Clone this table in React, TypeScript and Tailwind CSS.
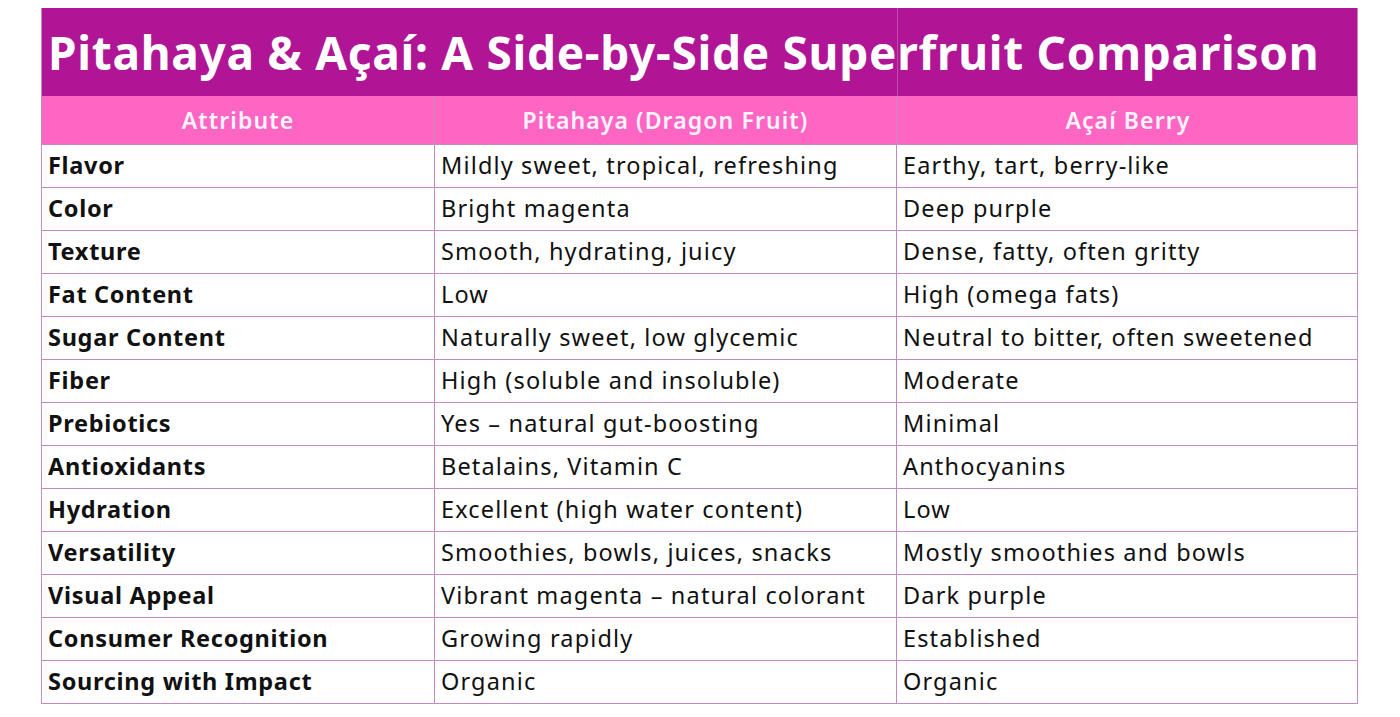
import React from "react";

const rows: [string, string, string][] = [
  ["Flavor", "Mildly sweet, tropical, refreshing", "Earthy, tart, berry-like"],
  ["Color", "Bright magenta", "Deep purple"],
  ["Texture", "Smooth, hydrating, juicy", "Dense, fatty, often gritty"],
  ["Fat Content", "Low", "High (omega fats)"],
  ["Sugar Content", "Naturally sweet, low glycemic", "Neutral to bitter, often sweetened"],
  ["Fiber", "High (soluble and insoluble)", "Moderate"],
  ["Prebiotics", "Yes – natural gut-boosting", "Minimal"],
  ["Antioxidants", "Betalains, Vitamin C", "Anthocyanins"],
  ["Hydration", "Excellent (high water content)", "Low"],
  ["Versatility", "Smoothies, bowls, juices, snacks", "Mostly smoothies and bowls"],
  ["Visual Appeal", "Vibrant magenta – natural colorant", "Dark purple"],
  ["Consumer Recognition", "Growing rapidly", "Established"],
  ["Sourcing with Impact", "Organic", "Organic"],
];

export default function App() {
  return (
    <div
      className="w-[1400px] h-[717px] bg-white pt-[8px] pl-[41px]"
      style={{ fontFamily: '"Noto Sans", "Open Sans", sans-serif' }}
    >
      <div className="w-[1317px] border-l border-r border-b border-[#c48ac4]">
        <div className="relative h-[88px] bg-[#b01595] flex items-center pl-[6px]">
          <div className="absolute top-0 bottom-0 left-[855px] w-px bg-[#c04aa8]" />
          <h1 className="relative text-white font-bold text-[46px] leading-none tracking-[0.7px] whitespace-nowrap">
            Pitahaya &amp; Açaí: A Side-by-Side Superfruit Comparison
          </h1>
        </div>
        <div className="grid grid-cols-[393px_462px_462px] h-[48px] bg-[#ff66c4] text-[#fff4fb] font-semibold text-[23px] tracking-[1.1px]">
          <div className="flex items-center justify-center border-r border-[#c48ac4]">Attribute</div>
          <div className="flex items-center justify-center border-r border-[#c48ac4]">Pitahaya (Dragon Fruit)</div>
          <div className="flex items-center justify-center">Açaí Berry</div>
        </div>
        {rows.map((r, i) => (
          <div
            key={i}
            className="grid grid-cols-[393px_462px_462px] h-[43px] border-t border-[#c48ac4] text-[23.5px] text-[#111111]"
          >
            <div className="flex items-center pl-[6px] font-bold tracking-[0.7px] border-r border-[#c48ac4] whitespace-nowrap">{r[0]}</div>
            <div className="flex items-center pl-[6px] tracking-[1.15px] border-r border-[#c48ac4] whitespace-nowrap">{r[1]}</div>
            <div className="flex items-center pl-[6px] tracking-[1.15px] whitespace-nowrap">{r[2]}</div>
          </div>
        ))}
      </div>
    </div>
  );
}
